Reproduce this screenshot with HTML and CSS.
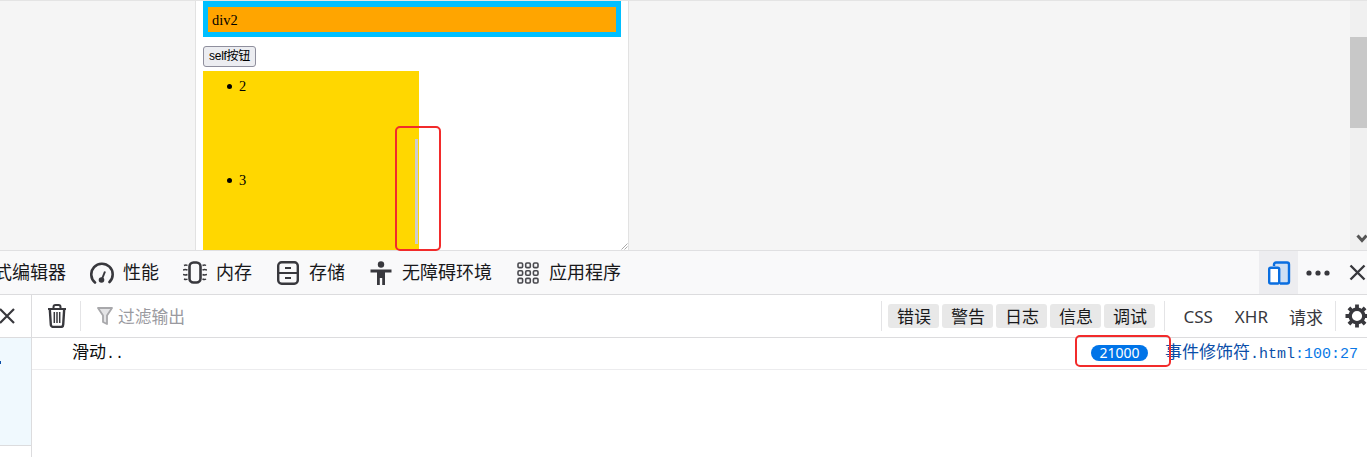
FILE: index.html
```html
<!DOCTYPE html>
<html lang="zh">
<head>
<meta charset="utf-8">
<title>事件修饰符</title>
<link rel="stylesheet" href="styles.css">
</head>
<body>
<section class="viewport">
  <div class="canvas">
    <div class="page">
      <div class="blue"><div class="orange">div2</div></div>
      <button class="self-btn">self按钮</button>
      <div class="yellow">
        <ul class="list"><li>2</li><li>3</li></ul>
        <span class="mini-thumb"></span>
      </div>
      <svg class="resizer" width="7" height="7" viewBox="0 0 7 7"><path d="M0.5 6.500 6.500 0.500M3.500 6.500 6.500 3.500" stroke="#aaa" fill="none"/></svg>
    </div>
  </div>
  <div class="scrollbar">
    <div class="thumb"></div>
    <svg class="arrow" width="12" height="9" viewBox="0 0 12 9"><path d="M1.500 1.500 6 6.500l4.500-5" stroke="#555" stroke-width="3" fill="none"/></svg>
  </div>
</section>

<nav class="toolbar">
  <span class="tab-clip">式编辑器</span>
  <div class="tab">
    <svg class="ico" width="24" height="24" viewBox="0 0 24 24"><path d="M5 21.500A10.700 10.700 0 1 1 19.500 21" fill="none" stroke="#38383d" stroke-width="2.600" stroke-linecap="round"/><circle cx="11.500" cy="19" r="2.800" fill="#38383d"/><path d="M12 18l3-7.500" stroke="#38383d" stroke-width="2"/></svg>
    <span>性能</span>
  </div>
  <div class="tab">
    <svg class="ico" width="24" height="24" viewBox="0 0 24 24"><rect x="6.500" y="1.500" width="11" height="20" rx="4" fill="none" stroke="#38383d" stroke-width="2.600"/><path d="M1 4.500q2-1 3.500 0M0 9q2-1 4.500 0M0 13.500q2 1 4.500 0M1 18q2 1 3.500 0M19.500 4.500q2-1 3.500 0M19.500 9q2-1 4.500 0M19.500 13.500q2 1 4.500 0M19.500 18q2 1 3.500 0" fill="none" stroke="#38383d" stroke-width="1.500"/></svg>
    <span>内存</span>
  </div>
  <div class="tab">
    <svg class="ico" width="24" height="24" viewBox="0 0 24 24"><rect x="2.200" y="1.200" width="19.600" height="21.600" rx="3.500" fill="none" stroke="#38383d" stroke-width="2.400"/><path d="M2 12h20M9 7h6M9 17h6" stroke="#38383d" stroke-width="2"/></svg>
    <span>存储</span>
  </div>
  <div class="tab">
    <svg class="ico" width="24" height="24" viewBox="0 0 24 24"><circle cx="12" cy="3.500" r="3.200" fill="#38383d"/><path d="M1.500 8.500h21v3H16V24h-2.800v-7h-2.400v7H8V11.500H1.500z" fill="#38383d"/></svg>
    <span>无障碍环境</span>
  </div>
  <div class="tab">
    <svg class="ico" width="24" height="24" viewBox="0 0 24 24"><g fill="none" stroke="#4a4a4f" stroke-width="1.600"><rect x="2" y="2" width="4.600" height="4.600" rx="1.200"/><rect x="9.700" y="2" width="4.600" height="4.600" rx="1.200"/><rect x="17.400" y="2" width="4.600" height="4.600" rx="1.200"/><rect x="2" y="9.700" width="4.600" height="4.600" rx="1.200"/><rect x="9.700" y="9.700" width="4.600" height="4.600" rx="1.200"/><rect x="17.400" y="9.700" width="4.600" height="4.600" rx="1.200"/><rect x="2" y="17.400" width="4.600" height="4.600" rx="1.200"/><rect x="9.700" y="17.400" width="4.600" height="4.600" rx="1.200"/><rect x="17.400" y="17.400" width="4.600" height="4.600" rx="1.200"/></g></svg>
    <span>应用程序</span>
  </div>
  <div class="toolbar-end">
    <div class="responsive">
      <svg width="24" height="24" viewBox="0 0 24 24"><path d="M7 1.500h13a2 2 0 0 1 2 2v17a2 2 0 0 1-2 2h-8V6H7z" fill="#cfdff3"/><path d="M7 5V3.500a2 2 0 0 1 2-2h11a2 2 0 0 1 2 2v17a2 2 0 0 1-2 2h-7" fill="none" stroke="#0a6ee0" stroke-width="2.400"/><rect x="2.200" y="6.700" width="10" height="15.800" rx="1.500" fill="#fff" stroke="#0a6ee0" stroke-width="2.400"/></svg>
    </div>
    <svg class="dots" width="24" height="6" viewBox="0 0 24 6"><circle cx="3" cy="3" r="2.600" fill="#38383d"/><circle cx="12" cy="3" r="2.600" fill="#38383d"/><circle cx="21" cy="3" r="2.600" fill="#38383d"/></svg>
    <svg class="close" width="17" height="17" viewBox="0 0 17 17"><path d="M1.500 1.500l14 14M15.500 1.500l-14 14" stroke="#38383d" stroke-width="2.400"/></svg>
  </div>
</nav>

<section class="console">
  <aside class="side">
    <div class="side-head"><svg width="16" height="16" viewBox="0 0 16 16"><path d="M0 1l14 14M14 1L0 15" stroke="#38383d" stroke-width="2.200"/></svg></div>
    <div class="side-row"><span class="side-mark"></span></div>
  </aside>
  <div class="main">
    <div class="filter-bar">
      <svg class="trash" width="20" height="24" viewBox="0 0 20 24"><path d="M1 5h18M6.500 5V3a2 2 0 0 1 2-2h3a2 2 0 0 1 2 2v2" fill="none" stroke="#38383d" stroke-width="2"/><path d="M2.800 5l1 15.500a2.500 2.500 0 0 0 2.500 2.500h7.400a2.500 2.500 0 0 0 2.500-2.500l1-15.500" fill="none" stroke="#38383d" stroke-width="2.400"/><path d="M7.300 8v11M10 8v11M12.700 8v11" stroke="#38383d" stroke-width="1.500"/></svg>
      <span class="vsep"></span>
      <svg class="funnel" width="16" height="19" viewBox="0 0 16 19"><path d="M1 1h14l-5 7.500V17l-4-2V8.500z" fill="#e4e4e6" stroke="#a8a8ab" stroke-width="1.800" stroke-linejoin="round"/></svg>
      <span class="filter-text">过滤输出</span>
      <div class="levels">
        <span class="vsep"></span>
        <span class="level">错误</span>
        <span class="level">警告</span>
        <span class="level">日志</span>
        <span class="level">信息</span>
        <span class="level">调试</span>
        <span class="vsep sep-after"></span>
        <span class="net net-css">CSS</span>
        <span class="net net-xhr">XHR</span>
        <span class="net net-req">请求</span>
        <span class="vsep sep-gear"></span>
        <svg class="gear" width="24" height="24" viewBox="0 0 24 24"><circle cx="12" cy="12" r="6.800" fill="none" stroke="#38383d" stroke-width="3.400"/><path d="M12 0.500v5M12 18.500v5M0.500 12h5M18.500 12h5M3.900 3.900l3.500 3.500M16.600 16.600l3.500 3.500M20.100 3.900l-3.500 3.500M7.400 16.600l-3.500 3.500" stroke="#38383d" stroke-width="3.800"/></svg>
      </div>
    </div>
    <div class="log-row">
      <span class="msg"><span class="cjk">滑动</span>..</span>
      <span class="badge">21000</span>
      <span class="source"><span class="cjk">事件修饰符</span>.html<span class="loc">:100:27</span></span>
    </div>
  </div>
</section>

<div class="mark mark-scroll"></div>
<div class="mark mark-badge"></div>
</body>
</html>
```

FILE: styles.css
```css
* { box-sizing: border-box; }

html, body {
  margin: 0;
  height: 457px;
  overflow: hidden;
}

body {
  position: relative;
  display: flex;
  flex-direction: column;
  background: #fff;
  color: #0c0c0d;
  font-family: "Noto Sans CJK SC", "Noto Sans", sans-serif;
}

/* page viewport */
.viewport {
  display: flex;
  height: 251px;
  background: #f5f5f5;
  border-top: 1px solid #e4e4e4;
  border-bottom: 1px solid #e0e0e2;
  flex: none;
}

.canvas {
  flex: 1;
  padding-left: 195px;
}

.page {
  position: relative;
  width: 434px;
  height: 249px;
  padding-left: 7px;
  background: #fff;
  border-left: 1px solid #e2e2e2;
  border-right: 1px solid #e2e2e2;
  font-family: "Liberation Serif", serif;
  font-size: 14.4px;
  color: #000;
  overflow: hidden;
}

.blue {
  width: 418px;
  height: 36px;
  border: 5px solid #00bfff;
  border-top-width: 6px;
}

.orange {
  height: 25px;
  padding: 1px 0 0 4px;
  background: #ffa500;
  line-height: 25px;
}

.self-btn {
  display: block;
  width: 53px;
  height: 21px;
  margin: 9px 0 4px;
  padding: 0;
  border: 1px solid #8f8f9d;
  border-radius: 3px;
  background: #ecedf1;
  font-family: "Liberation Sans", "Noto Sans CJK SC", sans-serif;
  font-size: 12px;
  line-height: 19px;
  letter-spacing: -0.3px;
  color: #000;
  white-space: nowrap;
}

.yellow {
  position: relative;
  width: 216px;
  height: 179px;
  background: #ffd700;
}

.list {
  margin: 0;
  padding: 7px 0 0 24px;
  list-style: none;
}

.list li {
  height: 94px;
  line-height: 17px;
}

.list li::before {
  content: "";
  display: inline-block;
  width: 5px;
  height: 5px;
  margin-right: 7px;
  border-radius: 50%;
  background: #000;
  vertical-align: 2px;
}

.mini-thumb {
  position: absolute;
  left: 212px;
  top: 68px;
  width: 3px;
  height: 105px;
  background: #cdcdcd;
}

.resizer {
  position: absolute;
  right: 0;
  bottom: 0;
}

.scrollbar {
  position: relative;
  width: 17px;
  background: #f0f0f0;
  flex: none;
  padding-top: 36px;
}

.thumb {
  height: 91px;
  background: #c8c8c8;
}

.arrow {
  position: absolute;
  left: 6px;
  top: 233px;
}

/* devtools toolbar */
.toolbar {
  display: flex;
  align-items: center;
  height: 44px;
  flex: none;
  background: #f9f9fa;
  border-bottom: 1px solid #dcdcde;
  font-size: 18px;
  color: #18181a;
  white-space: nowrap;
}

.tab-clip {
  margin: 0 12px 3px -6px;
}

.tab {
  display: flex;
  align-items: center;
  gap: 9px;
  padding: 0 12px;
}

.tab span { margin-bottom: 3px; }

.ico { flex: none; }

.toolbar-end {
  display: flex;
  align-items: center;
  height: 100%;
  margin-left: auto;
}

.responsive {
  display: flex;
  align-items: center;
  justify-content: center;
  width: 39px;
  height: 100%;
  background: #ededf0;
}

.dots { margin-left: 8px; }

.close { margin: 0 1px 0 19px; }

/* console */
.console {
  display: flex;
  flex: 1;
  min-height: 0;
}

.side {
  width: 32px;
  flex: none;
  border-right: 1px solid #dcdcde;
  background: #fff;
}

.side-head {
  display: flex;
  align-items: center;
  height: 43px;
  border-bottom: 1px solid #dcdcde;
}

.side-row {
  position: relative;
  height: 108px;
  background: #f0f9fe;
  border-bottom: 1px solid #dcdcde;
}

.side-mark {
  position: absolute;
  left: 0;
  top: 23px;
  width: 1px;
  height: 3px;
  background: #0a4ea8;
}

.main {
  flex: 1;
  min-width: 0;
}

.filter-bar {
  display: flex;
  align-items: center;
  height: 43px;
  border-bottom: 1px solid #dcdcde;
  padding-left: 15px;
  overflow: hidden;
}

.trash { flex: none; }

.vsep {
  width: 1px;
  height: 30px;
  background: #e4e4e6;
  flex: none;
}

.trash + .vsep { margin: 0 16px 0 13px; }

.funnel { flex: none; margin-right: 5px; }

.filter-text {
  font-size: 16.8px;
  color: #9a9aa0;
  margin-bottom: 1px;
}

.levels {
  display: flex;
  align-items: center;
  margin-left: auto;
  flex: none;
  margin-right: -2px;
}

.level {
  width: 51px;
  height: 24px;
  margin-right: 3px;
  border-radius: 3px;
  background: #e8e8e8;
  font-size: 17px;
  line-height: 24px;
  text-align: center;
  color: #18181a;
}

.levels > .vsep:first-child { margin-right: 6px; }

.sep-after { margin: 0 18px 0 6px; }

.net {
  font-size: 17px;
  color: #38383d;
}

.net-css { margin-right: 22px; font-family: "Noto Sans", sans-serif; }
.net-xhr { margin-right: 21px; font-family: "Noto Sans", sans-serif; }
.net-req { margin-right: 12px; }

.sep-gear { margin-right: 9px; }

.gear { flex: none; }

.log-row {
  display: flex;
  align-items: center;
  height: 32px;
  padding-left: 40px;
  border-bottom: 1px solid #ececee;
  font-family: "Liberation Mono", monospace;
  font-size: 15px;
  white-space: nowrap;
}

.cjk {
  font-family: "Noto Sans CJK SC", sans-serif;
  font-size: 17px;
}

.msg {
  margin-bottom: 6px;
  color: #0c0c0d;
}

.badge {
  width: 57px;
  height: 16px;
  margin: 0 17px 2px auto;
  border-radius: 8px;
  background: #0074e8;
  color: #fff;
  font-family: "Noto Sans", sans-serif;
  font-size: 14px;
  line-height: 16px;
  text-align: center;
}

.source {
  margin: 0 9px 6px 0;
  color: #0a4ea8;
}

.loc { color: #0a78e6; }

/* red annotation boxes drawn over the screenshot */
.mark {
  position: absolute;
  border: 2px solid #f22b2b;
  border-radius: 5px;
}

.mark-scroll {
  left: 395px;
  top: 126px;
  width: 46px;
  height: 125px;
}

.mark-badge {
  left: 1075px;
  top: 335px;
  width: 96px;
  height: 32px;
}
```
